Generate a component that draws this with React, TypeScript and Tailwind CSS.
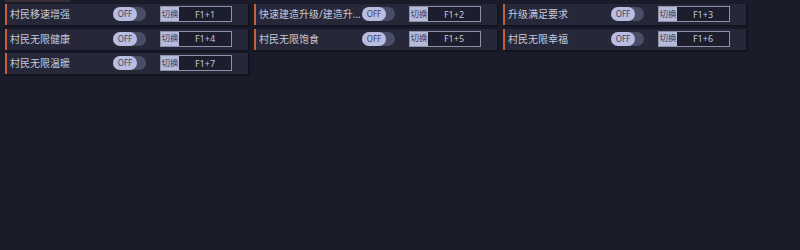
const cheats = [
  { name: "村民移速增强", key: "F1+1" },
  { name: "快速建造升级/建造升...", key: "F1+2" },
  { name: "升级满足要求", key: "F1+3" },
  { name: "村民无限健康", key: "F1+4" },
  { name: "村民无限饱食", key: "F1+5" },
  { name: "村民无限幸福", key: "F1+6" },
  { name: "村民无限温暖", key: "F1+7" },
];

function Toggle() {
  return (
    <div className="mt-[3px] flex h-[14px] w-[33px] shrink-0 items-center rounded-full bg-[#4a4d66]">
      <div className="flex h-[14px] w-[24px] items-center justify-center rounded-full bg-[#b9bde2] text-[8px] leading-none text-[#3b3e5c]">
        OFF
      </div>
    </div>
  );
}

function Hotkey({ value }: { value: string }) {
  return (
    <div className="ml-[14px] flex h-[16px] w-[72px] border border-[#8e91a8] bg-[#1c1e2d] text-[9px] leading-none">
      <div className="flex w-[18px] items-center justify-center whitespace-nowrap bg-[#b6badb] text-[8.5px] text-[#3a3d56]">
        切换
      </div>
      <div className="flex flex-1 items-center justify-center text-[#c3c5d6]">{value}</div>
    </div>
  );
}

export default function App() {
  return (
    <div
      className="h-[250px] w-[800px] overflow-hidden bg-[#1a1c2a]"
      style={{ fontFamily: "'Noto Sans', 'Noto Sans CJK SC', sans-serif" }}
    >
      {/* cut-off row above */}
      <div className="ml-[5px] h-[2px] w-[65px] bg-[#3a2d33]" />
      <div className="ml-[5px] mt-[2px] grid w-[741px] grid-cols-3 gap-x-[6px] gap-y-[3.5px]">
        {cheats.map((c) => (
          <div
            key={c.name}
            className="flex h-[21px] items-start border-l-2 border-[#c4603a] bg-[#262839] pl-[3px] shadow-[1px_1px_2px_rgba(0,0,0,0.55)]"
          >
            <div className="mt-[4px] w-[103px] shrink-0 whitespace-nowrap text-[10px] leading-[13px] text-[#c6c8d7]">
              {c.name}
            </div>
            <Toggle />
            <div className="mt-[2px]">
              <Hotkey value={c.key} />
            </div>
          </div>
        ))}
      </div>
    </div>
  );
}
